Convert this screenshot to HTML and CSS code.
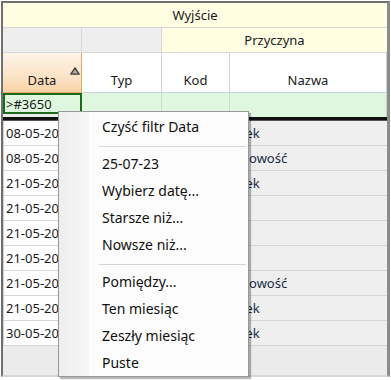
FILE: index.html
```html
<!DOCTYPE html>
<html lang="pl">
<head>
<meta charset="utf-8">
<link rel="stylesheet" href="styles.css">
</head>
<body>
<div class="frame">
  <div class="grid">
    <div class="band1">Wyjście</div>

    <div class="band2 gray"></div>
    <div class="band2 gray"></div>
    <div class="band2 yellow">Przyczyna</div>

    <div class="head sorted">Data
      <svg class="sort" width="10" height="8" viewBox="0 0 10 8"><polygon points="5,0.8 9.2,7.2 0.8,7.2" fill="#a8a8a8" stroke="#404040" stroke-width="1.3" stroke-linejoin="round"/></svg>
    </div>
    <div class="head">Typ</div>
    <div class="head">Kod</div>
    <div class="head">Nazwa</div>

    <div class="filter active">&gt;#3650</div>
    <div class="filter"></div>
    <div class="filter"></div>
    <div class="filter"></div>

    <div class="thick"></div>

    <div class="cell date">08-05-2023</div><div class="cell"></div><div class="cell"></div><div class="cell name">Wiek</div>
    <div class="cell date">08-05-2023</div><div class="cell"></div><div class="cell"></div><div class="cell name long">Gotowość</div>
    <div class="cell date">21-05-2023</div><div class="cell"></div><div class="cell"></div><div class="cell name">Wiek</div>
    <div class="cell date">21-05-2023</div><div class="cell"></div><div class="cell"></div><div class="cell name"></div>
    <div class="cell date">21-05-2023</div><div class="cell"></div><div class="cell"></div><div class="cell name"></div>
    <div class="cell date">21-05-2023</div><div class="cell"></div><div class="cell"></div><div class="cell name"></div>
    <div class="cell date">21-05-2023</div><div class="cell"></div><div class="cell"></div><div class="cell name long">Gotowość</div>
    <div class="cell date">21-05-2023</div><div class="cell"></div><div class="cell"></div><div class="cell name">Wiek</div>
    <div class="cell date">30-05-2023</div><div class="cell"></div><div class="cell"></div><div class="cell name">Wiek</div>

    <div class="empty"></div>
  </div>
</div>

<div class="menu">
  <div class="gutter"></div>
  <div class="item"><span>Czyść filtr Data</span></div>
  <div class="sep"></div>
  <div class="item"><span>25-07-23</span></div>
  <div class="item"><span>Wybierz datę...</span></div>
  <div class="item"><span>Starsze niż...</span></div>
  <div class="item"><span>Nowsze niż...</span></div>
  <div class="sep"></div>
  <div class="item"><span>Pomiędzy...</span></div>
  <div class="item"><span>Ten miesiąc</span></div>
  <div class="item"><span>Zeszły miesiąc</span></div>
  <div class="item"><span>Puste</span></div>
</div>
</body>
</html>
```

FILE: styles.css
```css
* { box-sizing: border-box; }
html, body { margin: 0; padding: 0; }
body {
  width: 391px;
  height: 380px;
  background: #ffffff;
  font-family: "Noto Sans", "Open Sans", sans-serif;
  font-size: 13px;
  color: #1a1a1a;
  position: relative;
  overflow: hidden;
}
.frame {
  margin: 1px 0 0 1px;
  width: 389px;
  height: 376px;
  border-left: 2px solid #6f6f6f;
  border-top: 2px solid #6f6f6f;
  border-right: 3px solid #8c8c8c;
  border-bottom: 2px solid #d6d6d6;
  background: #ebebeb;
}
.grid {
  display: grid;
  grid-template-columns: 79px 80px 68px 157px;
  grid-template-rows: 25px 25px 40px 24px 4px repeat(9, 25px) 1fr;
  height: 100%;
}
.band1 {
  grid-column: 1 / 5;
  background: #fffde2;
  border-bottom: 1px solid #d8d8d8;
  display: flex;
  align-items: center;
  justify-content: center;
}
.band2 {
  border-bottom: 1px solid #d8d8d8;
  display: flex;
  align-items: center;
  justify-content: center;
}
.band2.gray { background: #eeeeee; border-right: 1px solid #d8d8d8; }
.band2.yellow { grid-column: 3 / 5; background: #fffde2; }
.head {
  background: #ffffff;
  border-right: 1px solid #c9d3e2;
  border-bottom: 1px solid #c9d3e2;
  display: flex;
  align-items: flex-end;
  justify-content: center;
  padding-bottom: 3px;
  position: relative;
}
.head.sorted {
  background: linear-gradient(#fdf4e8, #fbe3c6 60%, #f9d3a8);
  border-right: 1px solid #f3a860;
  border-bottom: 1px solid #f3a860;
}
.sort { position: absolute; left: 67px; top: 14px; }
.filter {
  background: #dff7df;
  border-right: 1px solid #c8dcc8;
  display: flex;
  align-items: center;
  padding-left: 3px;
  padding-bottom: 3px;
}
.filter.active {
  border: 2px solid #1c6b1c;
  margin-bottom: 3px;
  padding-bottom: 0;
  padding-left: 1px;
}
.thick {
  grid-column: 1 / 5;
  background: #111;
  border-bottom: 1px solid #555;
}
.cell {
  background: #efefef;
  border-bottom: 1px solid #d6d6d6;
  display: flex;
  align-items: center;
  padding-left: 3px;
  white-space: nowrap;
  overflow: hidden;
}
.cell.date {
  background: #ffffff;
  border-left: 1px solid #d0d0d0;
  border-right: 1px solid #d0d0d0;
  padding-left: 2px;
}
.cell.name { color: #1a2a44; padding-left: 0; }
.cell.name.long { padding-left: 0; margin-left: -3px; }
.empty { grid-column: 1 / 5; background: #ebebeb; }

.menu {
  position: absolute;
  left: 58px;
  top: 111px;
  width: 191px;
  height: 266px;
  background: #fcfcfc;
  border: 1px solid #979797;
  box-shadow: 2px 2px 1px rgba(0,0,0,0.28);
  padding-top: 2px;
  font-size: 14px;
  color: #101010;
}
.gutter {
  position: absolute;
  left: 0; top: 0; bottom: 0;
  width: 30px;
  background: linear-gradient(90deg, #eeeeee, #f6f6f6);
}
.item {
  position: relative;
  height: 27px;
  display: flex;
  align-items: center;
  padding-left: 43px;
  padding-bottom: 2px;
}
.sep {
  position: relative;
  height: 10px;
  margin-left: 40px;
  margin-right: 2px;
  display: flex;
  align-items: center;
}
.sep::before {
  content: "";
  display: block;
  width: 100%;
  height: 1px;
  background: #d5d5d5;
}
```
